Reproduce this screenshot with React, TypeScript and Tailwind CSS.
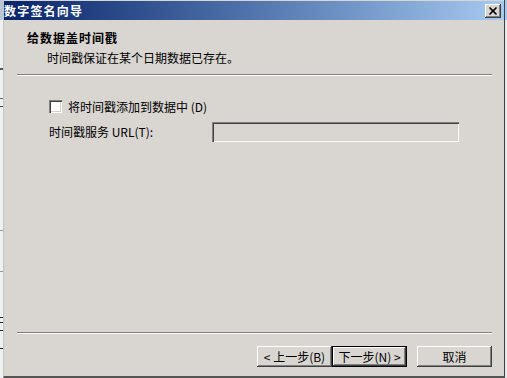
import { X } from 'lucide-react'

const cn = "font-['Noto_Sans_CJK_SC','Liberation_Sans',sans-serif]"

function Btn({ label, focused }: { label: string; focused?: boolean }) {
  return (
    <button
      className={`w-[75px] h-[21px] flex items-center justify-center text-[12px] leading-none text-black bg-[#d9d5d1] ${
        focused
          ? 'border border-black shadow-[inset_-1px_-1px_#404040,inset_1px_1px_#fff,inset_-2px_-2px_#808080]'
          : 'shadow-[inset_-1px_-1px_#404040,inset_1px_1px_#fff,inset_-2px_-2px_#808080]'
      }`}
    >
      {label}
    </button>
  )
}

export default function App() {
  return (
    <div className={`w-[507px] h-[378px] flex overflow-hidden bg-[#eceff3] ${cn}`}>
      {/* desktop strip behind the window */}
      <div className="w-[3px] flex flex-col bg-[#eef0f2]">
        <div className="h-[20px] bg-[#b9c6da]" />
        <div className="mt-[48px] h-[2px] w-[3px] bg-[#555]" />
        <div className="mt-[28px] h-[1px] w-[3px] bg-[#666]" />
        <div className="mt-[7px] h-[1px] w-[3px] bg-[#444]" />
        <div className="mt-[123px] h-[1px] w-[3px] bg-[#999]" />
        <div className="mt-[40px] h-[1px] w-[3px] bg-[#999]" />
        <div className="mt-[45px] h-[1px] w-[3px] bg-[#222]" />
        <div className="mt-[4px] h-[1px] w-[3px] bg-[#222]" />
        <div className="mt-[7px] h-[1px] w-[3px] bg-[#222]" />
        <div className="mt-[17px] h-[1px] w-[3px] bg-[#222]" />
      </div>

      {/* window */}
      <div className="w-[502px] flex flex-col bg-[#d9d5d1] border-l border-[#c8c4c0] border-b-2 border-b-[#555] border-r border-r-[#404040]">
        <div className="h-[1px] bg-[#d9d5d1]" />
        {/* title bar */}
        <div className="h-[19px] flex items-center justify-between pl-[0px] pr-[3px] bg-gradient-to-r from-[#0a246a] to-[#a6caf0]">
          <span className="text-white font-bold text-[12px] leading-none tracking-[1.2px]">数字签名向导</span>
          <div className="w-[16px] h-[14px] flex items-center justify-center bg-[#d9d5d1] shadow-[inset_-1px_-1px_#404040,inset_1px_1px_#fff,inset_-2px_-2px_#808080]">
            <X size={12} strokeWidth={3.4} color="#000" />
          </div>
        </div>

        {/* header */}
        <div className="pt-[11px] pl-[23px] text-black">
          <div className="font-bold text-[12px] leading-[14px] tracking-[1px]">给数据盖时间戳</div>
          <div className="mt-[6px] pl-[20px] text-[12px] leading-[14px]">时间戳保证在某个日期数据已存在。</div>
        </div>
        <div className="mt-[9px] ml-[13px] mr-[12px] h-[2px] border-t border-[#808080] border-b border-b-white" />

        {/* content */}
        <div className="pl-[45px] pt-[24px] text-[12px] text-black">
          <div className="flex items-center h-[13px]">
            <div className="w-[13px] h-[13px] bg-white shadow-[inset_1px_1px_#808080,inset_2px_2px_#404040,inset_-1px_-1px_#fff,inset_-2px_-2px_#d4d0c8]" />
            <span className="ml-[6px] leading-none">将时间戳添加到数据中 (D)</span>
          </div>
          <div className="flex items-center mt-[9px] h-[20px]">
            <span className="w-[163px] leading-none">时间戳服务 URL(T):</span>
            <div className="w-[247px] h-[20px] bg-[#d9d5d1] shadow-[inset_1px_1px_#808080,inset_2px_2px_#404040,inset_-1px_-1px_#fff,inset_-2px_-2px_#d4d0c8]" />
          </div>
        </div>

        <div className="flex-1" />

        <div className="ml-[13px] mr-[12px] h-[2px] border-t border-[#808080] border-b border-b-white" />
        <div className="flex justify-end pr-[12px] pt-[12px] pb-[9px]">
          <Btn label="< 上一步(B)" />
          <Btn label="下一步(N) >" focused />
          <div className="w-[10px]" />
          <Btn label="取消" />
        </div>
      </div>

      <div className="w-[2px] flex flex-col bg-[#e6e8ea]">
        <div className="h-[20px] bg-[#a6caf0]" />
      </div>
    </div>
  )
}
